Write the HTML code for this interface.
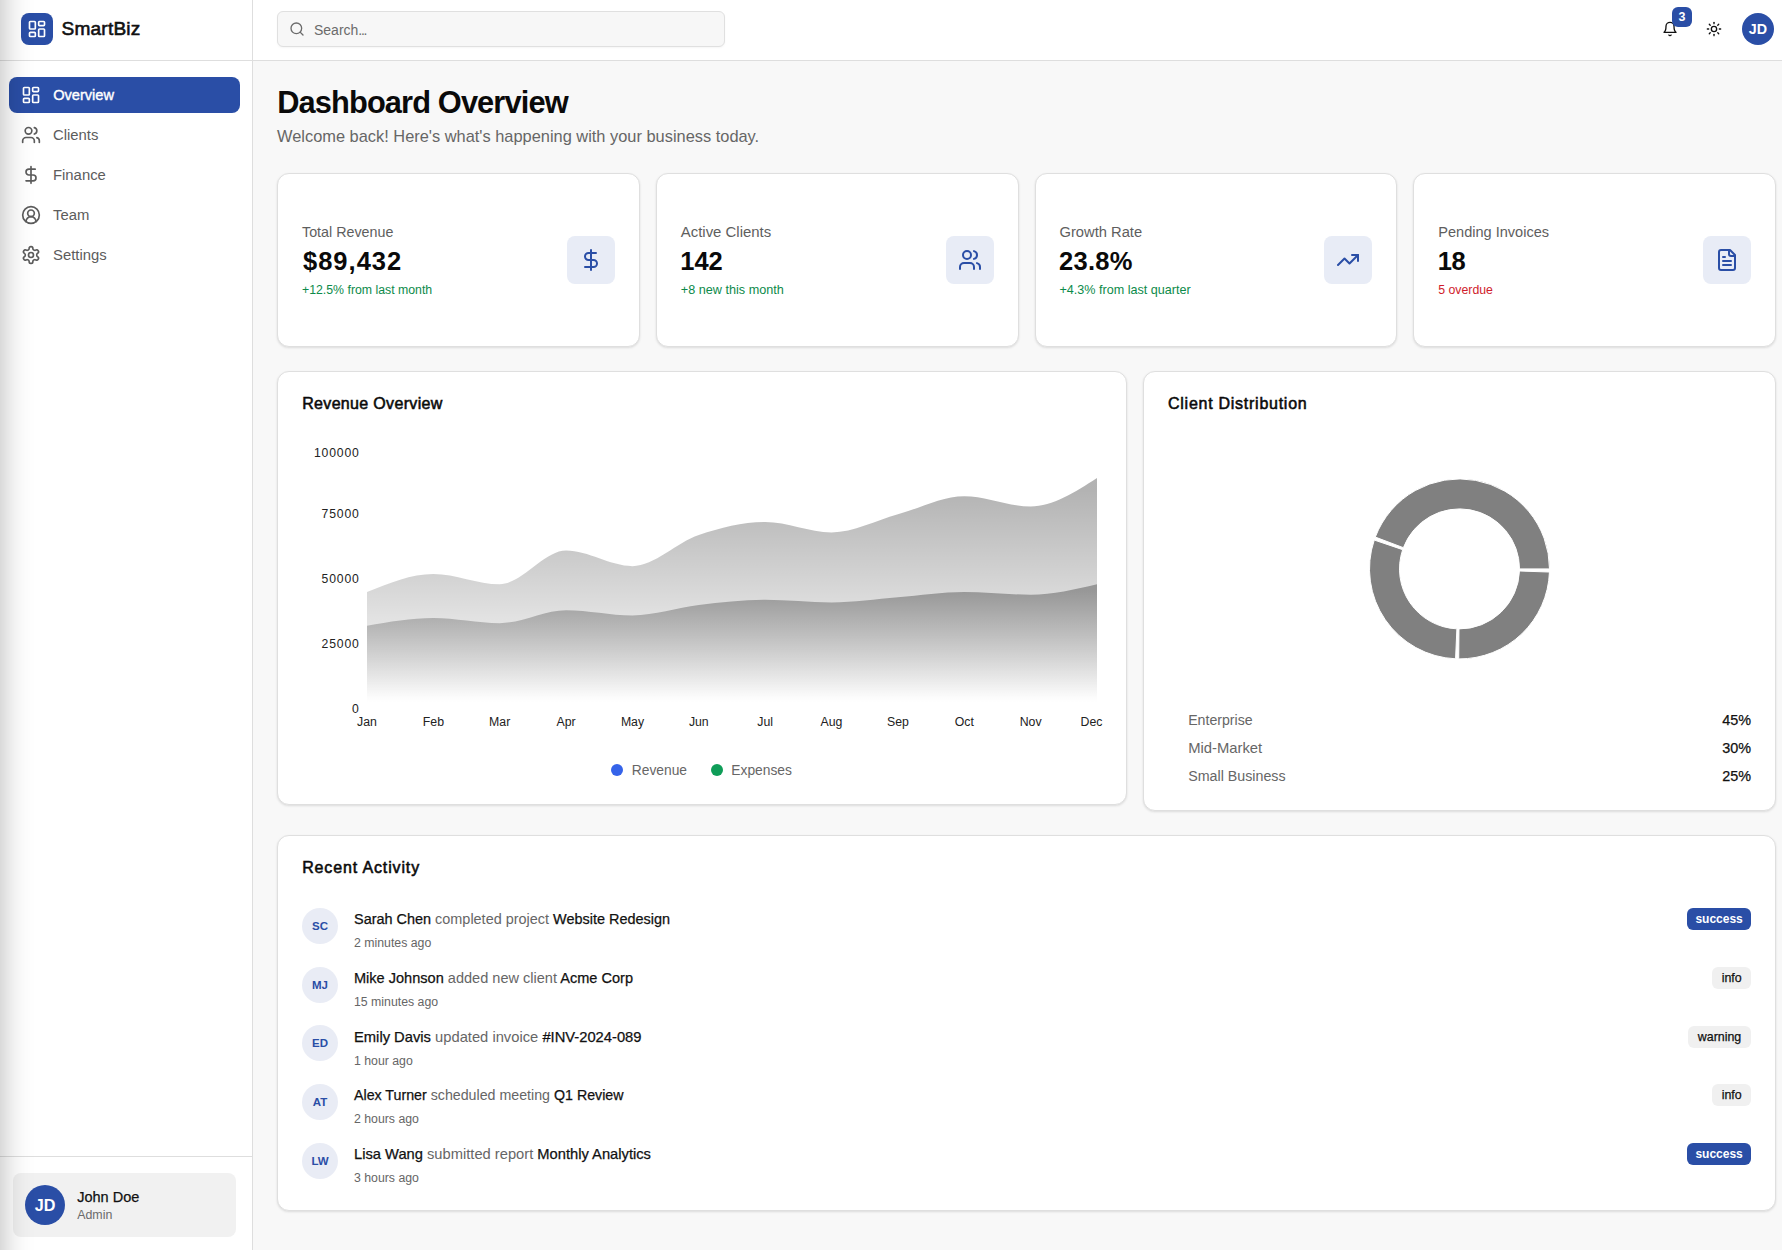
<!DOCTYPE html>
<html lang="en"><head><meta charset="utf-8"><title>SmartBiz Dashboard</title>
<style>
*{box-sizing:border-box;margin:0;padding:0}
html,body{width:1782px;height:1250px;overflow:hidden}
body{background:#f8f8f8;font-family:"Liberation Sans",sans-serif;position:relative;color:#111}
.t{position:absolute;white-space:nowrap;line-height:1}
.a{position:absolute}
.ic{position:absolute;display:block}
.sidebar{position:absolute;left:0;top:0;width:253px;height:1250px;background:#fff;border-right:1px solid #dedede}
.topbar{position:absolute;left:253px;top:0;width:1529px;height:61px;background:#fff;border-bottom:1px solid #dedede}
.sbhead{position:absolute;left:0;top:0;width:252px;height:61px;border-bottom:1px solid #dedede}
.sbfoot{position:absolute;left:0;top:1156px;width:252px;height:94px;border-top:1px solid #dedede;background:#fff}
.card{position:absolute;background:#fff;border:1px solid #dfdfdf;border-radius:12px;box-shadow:0 1px 3px rgba(0,0,0,.07),0 1px 2px rgba(0,0,0,.05)}
.md{-webkit-text-stroke:0.25px currentColor}
.edge{position:absolute;left:-400px;top:-50px;width:400px;height:1350px;box-shadow:0 0 30px rgba(0,0,0,.3);z-index:50;background:#fff}
</style></head><body>

<aside class="sidebar">
<div class="sbhead"></div>
<div class="a" style="left:21px;top:13px;width:32px;height:32px;border-radius:8px;background:#2a4ea6"></div>
<div class="ic" style="left:27px;top:19px"><svg width="20" height="20" viewBox="0 0 24 24" fill="none" stroke="#fff" stroke-width="2" stroke-linecap="round" stroke-linejoin="round" ><rect width="7" height="9" x="3" y="3" rx="1"/><rect width="7" height="5" x="14" y="3" rx="1"/><rect width="7" height="9" x="14" y="12" rx="1"/><rect width="7" height="5" x="3" y="16" rx="1"/></svg></div>
<div class="t" style="left:61.50px;top:19.43px;font-size:19.1px;color:#111;font-weight:400;-webkit-text-stroke:0.6px #111;letter-spacing:0.2px">SmartBiz</div>
<div class="a" style="left:9px;top:77px;width:231px;height:36px;border-radius:8px;background:#2a4ea6"></div>
<div class="ic" style="left:21px;top:85px"><svg width="20" height="20" viewBox="0 0 24 24" fill="none" stroke="#fff" stroke-width="2" stroke-linecap="round" stroke-linejoin="round" ><rect width="7" height="9" x="3" y="3" rx="1"/><rect width="7" height="5" x="14" y="3" rx="1"/><rect width="7" height="9" x="14" y="12" rx="1"/><rect width="7" height="5" x="3" y="16" rx="1"/></svg></div>
<div class="t" style="left:53.20px;top:88.14px;font-size:14.6px;color:#fff;font-weight:400;-webkit-text-stroke:0.4px #fff">Overview</div>
<div class="ic" style="left:21px;top:125px"><svg width="20" height="20" viewBox="0 0 24 24" fill="none" stroke="#5c5c5c" stroke-width="2" stroke-linecap="round" stroke-linejoin="round" ><path d="M16 21v-2a4 4 0 0 0-4-4H6a4 4 0 0 0-4 4v2"/><circle cx="9" cy="7" r="4"/><path d="M22 21v-2a4 4 0 0 0-3-3.87"/><path d="M16 3.13a4 4 0 0 1 0 7.75"/></svg></div>
<div class="t" style="left:53.00px;top:128.03px;font-size:14.85px;color:#5c5c5c;font-weight:400;">Clients</div>
<div class="ic" style="left:21px;top:165px"><svg width="20" height="20" viewBox="0 0 24 24" fill="none" stroke="#5c5c5c" stroke-width="2" stroke-linecap="round" stroke-linejoin="round" ><line x1="12" x2="12" y1="2" y2="22"/><path d="M17 5H9.5a3.5 3.5 0 0 0 0 7h5a3.5 3.5 0 0 1 0 7H6"/></svg></div>
<div class="t" style="left:53.00px;top:168.03px;font-size:14.85px;color:#5c5c5c;font-weight:400;">Finance</div>
<div class="ic" style="left:21px;top:205px"><svg width="20" height="20" viewBox="0 0 24 24" fill="none" stroke="#5c5c5c" stroke-width="2" stroke-linecap="round" stroke-linejoin="round" ><path d="M18 20a6 6 0 0 0-12 0"/><circle cx="12" cy="10" r="4"/><circle cx="12" cy="12" r="10"/></svg></div>
<div class="t" style="left:53.00px;top:208.03px;font-size:14.85px;color:#5c5c5c;font-weight:400;">Team</div>
<div class="ic" style="left:21px;top:245px"><svg width="20" height="20" viewBox="0 0 24 24" fill="none" stroke="#5c5c5c" stroke-width="2" stroke-linecap="round" stroke-linejoin="round" ><path d="M12.22 2h-.44a2 2 0 0 0-2 2v.18a2 2 0 0 1-1 1.73l-.43.25a2 2 0 0 1-2 0l-.15-.08a2 2 0 0 0-2.73.73l-.22.38a2 2 0 0 0 .73 2.73l.15.1a2 2 0 0 1 1 1.72v.51a2 2 0 0 1-1 1.74l-.15.09a2 2 0 0 0-.73 2.73l.22.38a2 2 0 0 0 2.73.73l.15-.08a2 2 0 0 1 2 0l.43.25a2 2 0 0 1 1 1.73V20a2 2 0 0 0 2 2h.44a2 2 0 0 0 2-2v-.18a2 2 0 0 1 1-1.73l.43-.25a2 2 0 0 1 2 0l.15.08a2 2 0 0 0 2.73-.73l.22-.39a2 2 0 0 0-.73-2.73l-.15-.08a2 2 0 0 1-1-1.74v-.5a2 2 0 0 1 1-1.74l.15-.09a2 2 0 0 0 .73-2.73l-.22-.38a2 2 0 0 0-2.73-.73l-.15.08a2 2 0 0 1-2 0l-.43-.25a2 2 0 0 1-1-1.73V4a2 2 0 0 0-2-2z"/><circle cx="12" cy="12" r="3"/></svg></div>
<div class="t" style="left:53.00px;top:248.03px;font-size:14.85px;color:#5c5c5c;font-weight:400;">Settings</div>
<div class="sbfoot"></div>
<div class="a" style="left:13px;top:1173px;width:223px;height:64px;border-radius:8px;background:#f1f1f1"></div>
<div class="a" style="left:25px;top:1185px;width:40px;height:40px;border-radius:50%;background:#2a4ea6"></div>
<div class="a" style="left:25px;top:1185px;width:40px;height:40px;line-height:40px;text-align:center;color:#fff;font-weight:700;font-size:16.2px;padding-top:0px">JD</div>
<div class="t md" style="left:77.20px;top:1189.73px;font-size:14.5px;color:#111;font-weight:400;">John Doe</div>
<div class="t" style="left:77.20px;top:1209.00px;font-size:12.4px;color:#6b6b6b;font-weight:400;">Admin</div>
</aside>
<header class="topbar"></header>
<div class="a" style="left:277px;top:11px;width:448px;height:36px;border-radius:6px;background:#f7f7f7;border:1px solid #e0e0e0;box-shadow:0 1px 2px rgba(0,0,0,.04)"></div>
<div class="ic" style="left:289px;top:21px"><svg width="16" height="16" viewBox="0 0 24 24" fill="none" stroke="#6b6b6b" stroke-width="2" stroke-linecap="round" stroke-linejoin="round" ><circle cx="11" cy="11" r="8"/><path d="m21 21-4.3-4.3"/></svg></div>
<div class="t" style="left:314.00px;top:23.15px;font-size:14px;color:#6b6b6b;font-weight:400;">Search<span style='letter-spacing:-1.3px'>...</span></div>
<div class="ic" style="left:1662px;top:21px"><svg width="16" height="16" viewBox="0 0 24 24" fill="none" stroke="#111" stroke-width="2" stroke-linecap="round" stroke-linejoin="round" ><path d="M6 8a6 6 0 0 1 12 0c0 7 3 9 3 9H3s3-2 3-9"/><path d="M10.3 21a1.94 1.94 0 0 0 3.4 0"/></svg></div>
<div class="a" style="left:1672px;top:7px;width:20px;height:20px;border-radius:6px;background:#2a4ea6;color:#fff;font-weight:700;font-size:12.5px;line-height:20px;text-align:center">3</div>
<div class="ic" style="left:1706px;top:21px"><svg width="16" height="16" viewBox="0 0 24 24" fill="none" stroke="#111" stroke-width="2" stroke-linecap="round" stroke-linejoin="round" ><circle cx="12" cy="12" r="4"/><path d="M12 2v2"/><path d="M12 20v2"/><path d="m4.93 4.93 1.41 1.41"/><path d="m17.66 17.66 1.41 1.41"/><path d="M2 12h2"/><path d="M20 12h2"/><path d="m6.34 17.66-1.41 1.41"/><path d="m19.07 4.93-1.41 1.41"/></svg></div>
<div class="a" style="left:1742px;top:13px;width:32px;height:32px;border-radius:50%;background:#2a4ea6;color:#fff;font-weight:700;font-size:14.3px;line-height:32px;text-align:center">JD</div>
<div class="t" style="left:277.20px;top:87.53px;font-size:30.8px;color:#0a0a0a;font-weight:700;letter-spacing:-0.88px">Dashboard Overview</div>
<div class="t" style="left:277.00px;top:128.02px;font-size:16.4px;color:#666;font-weight:400;">Welcome back! Here&#39;s what&#39;s happening with your business today.</div>
<div class="card" style="left:277.00px;top:173px;width:362.75px;height:174px"></div>
<div class="t" style="left:302.00px;top:224.90px;font-size:14.3px;color:#5e5e5e;font-weight:400;">Total Revenue</div>
<div class="t" style="left:303.00px;top:249.21px;font-size:25.5px;color:#0a0a0a;font-weight:700;letter-spacing:1.0px">$89,432</div>
<div class="t" style="left:302.00px;top:283.59px;font-size:12.3px;color:#0c8a4a;font-weight:400;">+12.5% from last month</div>
<div class="a" style="left:566.75px;top:236px;width:48px;height:48px;border-radius:8px;background:#e8ecf6"></div>
<div class="ic" style="left:578.75px;top:248px"><svg width="24" height="24" viewBox="0 0 24 24" fill="none" stroke="#2a4ea6" stroke-width="2" stroke-linecap="round" stroke-linejoin="round" ><line x1="12" x2="12" y1="2" y2="22"/><path d="M17 5H9.5a3.5 3.5 0 0 0 0 7h5a3.5 3.5 0 0 1 0 7H6"/></svg></div>
<div class="card" style="left:655.75px;top:173px;width:362.75px;height:174px"></div>
<div class="t" style="left:680.75px;top:224.94px;font-size:14.95px;color:#5e5e5e;font-weight:400;">Active Clients</div>
<div class="t" style="left:680.25px;top:249.21px;font-size:25.5px;color:#0a0a0a;font-weight:700;letter-spacing:0px">142</div>
<div class="t" style="left:680.75px;top:283.88px;font-size:12.66px;color:#0c8a4a;font-weight:400;">+8 new this month</div>
<div class="a" style="left:945.50px;top:236px;width:48px;height:48px;border-radius:8px;background:#e8ecf6"></div>
<div class="ic" style="left:957.50px;top:248px"><svg width="24" height="24" viewBox="0 0 24 24" fill="none" stroke="#2a4ea6" stroke-width="2" stroke-linecap="round" stroke-linejoin="round" ><path d="M16 21v-2a4 4 0 0 0-4-4H6a4 4 0 0 0-4 4v2"/><circle cx="9" cy="7" r="4"/><path d="M22 21v-2a4 4 0 0 0-3-3.87"/><path d="M16 3.13a4 4 0 0 1 0 7.75"/></svg></div>
<div class="card" style="left:1034.50px;top:173px;width:362.75px;height:174px"></div>
<div class="t" style="left:1059.50px;top:224.54px;font-size:14.72px;color:#5e5e5e;font-weight:400;">Growth Rate</div>
<div class="t" style="left:1059.00px;top:249.21px;font-size:25.5px;color:#0a0a0a;font-weight:700;letter-spacing:0.3px">23.8%</div>
<div class="t" style="left:1059.50px;top:283.95px;font-size:12.58px;color:#0c8a4a;font-weight:400;">+4.3% from last quarter</div>
<div class="a" style="left:1324.25px;top:236px;width:48px;height:48px;border-radius:8px;background:#e8ecf6"></div>
<div class="ic" style="left:1336.25px;top:248px"><svg width="24" height="24" viewBox="0 0 24 24" fill="none" stroke="#2a4ea6" stroke-width="2" stroke-linecap="round" stroke-linejoin="round" ><polyline points="22 7 13.5 15.5 8.5 10.5 2 17"/><polyline points="16 7 22 7 22 13"/></svg></div>
<div class="card" style="left:1413.25px;top:173px;width:362.75px;height:174px"></div>
<div class="t" style="left:1438.25px;top:224.67px;font-size:14.56px;color:#5e5e5e;font-weight:400;">Pending Invoices</div>
<div class="t" style="left:1437.75px;top:249.21px;font-size:25.5px;color:#0a0a0a;font-weight:700;letter-spacing:-0.5px">18</div>
<div class="t" style="left:1438.25px;top:283.59px;font-size:12.3px;color:#d01c2c;font-weight:400;">5 overdue</div>
<div class="a" style="left:1703.00px;top:236px;width:48px;height:48px;border-radius:8px;background:#e8ecf6"></div>
<div class="ic" style="left:1715.00px;top:248px"><svg width="24" height="24" viewBox="0 0 24 24" fill="none" stroke="#2a4ea6" stroke-width="2" stroke-linecap="round" stroke-linejoin="round" ><path d="M15 2H6a2 2 0 0 0-2 2v16a2 2 0 0 0 2 2h12a2 2 0 0 0 2-2V7Z"/><path d="M14 2v4a2 2 0 0 0 2 2h4"/><path d="M10 9H8"/><path d="M16 13H8"/><path d="M16 17H8"/></svg></div>
<div class="card" style="left:277px;top:371px;width:849.71px;height:434px"></div>
<div class="card" style="left:1142.71px;top:371px;width:633.29px;height:440px"></div>
<div class="t" style="left:302.20px;top:396.06px;font-size:16px;color:#0a0a0a;font-weight:400;-webkit-text-stroke:0.55px #0a0a0a;letter-spacing:0.33px">Revenue Overview</div>
<svg class="a" style="left:0;top:0" width="1782" height="1250" viewBox="0 0 1782 1250">
<defs><linearGradient id="gR" x1="0" y1="0" x2="0" y2="1"><stop offset="5%" stop-color="#000" stop-opacity="0.3"/><stop offset="95%" stop-color="#000" stop-opacity="0"/></linearGradient><linearGradient id="gE" x1="0" y1="0" x2="0" y2="1"><stop offset="5%" stop-color="#000" stop-opacity="0.3"/><stop offset="95%" stop-color="#000" stop-opacity="0"/></linearGradient></defs>
<path d="M367.00,592.06C389.12,582.99,411.24,573.92,433.36,573.92C455.48,573.92,477.61,584.28,499.73,584.28C521.85,584.28,543.97,550.59,566.09,550.59C588.21,550.59,610.33,566.14,632.45,566.14C654.58,566.14,676.70,542.38,698.82,535.04C720.94,527.69,743.06,522.08,765.18,522.08C787.30,522.08,809.42,532.44,831.55,532.44C853.67,532.44,875.79,520.35,897.91,514.30C920.03,508.25,942.15,496.16,964.27,496.16C986.39,496.16,1008.52,506.52,1030.64,506.52C1052.76,506.52,1074.88,492.27,1097.00,478.01L1097.00,708.70L367.00,708.70Z" fill="url(#gR)"/>
<path d="M367.00,625.76C389.12,621.87,411.24,617.98,433.36,617.98C455.48,617.98,477.61,623.16,499.73,623.16C521.85,623.16,543.97,610.20,566.09,610.20C588.21,610.20,610.33,615.39,632.45,615.39C654.58,615.39,676.70,607.61,698.82,605.02C720.94,602.43,743.06,599.84,765.18,599.84C787.30,599.84,809.42,602.43,831.55,602.43C853.67,602.43,875.79,598.97,897.91,597.24C920.03,595.52,942.15,592.06,964.27,592.06C986.39,592.06,1008.52,594.65,1030.64,594.65C1052.76,594.65,1074.88,589.47,1097.00,584.28L1097.00,708.70L367.00,708.70Z" fill="url(#gE)"/>
<text x="359.7" y="457.3" text-anchor="end" font-family="Liberation Sans" font-size="12.2" letter-spacing="0.85" fill="#222">100000</text>
<text x="359.7" y="518.1" text-anchor="end" font-family="Liberation Sans" font-size="12.2" letter-spacing="0.85" fill="#222">75000</text>
<text x="359.7" y="582.5" text-anchor="end" font-family="Liberation Sans" font-size="12.2" letter-spacing="0.85" fill="#222">50000</text>
<text x="359.7" y="647.5" text-anchor="end" font-family="Liberation Sans" font-size="12.2" letter-spacing="0.85" fill="#222">25000</text>
<text x="359.7" y="713.3" text-anchor="end" font-family="Liberation Sans" font-size="12.2" letter-spacing="0.85" fill="#222">0</text>
<text x="367.0" y="726.0" text-anchor="middle" font-family="Liberation Sans" font-size="12.3" fill="#222">Jan</text>
<text x="433.4" y="726.0" text-anchor="middle" font-family="Liberation Sans" font-size="12.3" fill="#222">Feb</text>
<text x="499.7" y="726.0" text-anchor="middle" font-family="Liberation Sans" font-size="12.3" fill="#222">Mar</text>
<text x="566.1" y="726.0" text-anchor="middle" font-family="Liberation Sans" font-size="12.3" fill="#222">Apr</text>
<text x="632.5" y="726.0" text-anchor="middle" font-family="Liberation Sans" font-size="12.3" fill="#222">May</text>
<text x="698.8" y="726.0" text-anchor="middle" font-family="Liberation Sans" font-size="12.3" fill="#222">Jun</text>
<text x="765.2" y="726.0" text-anchor="middle" font-family="Liberation Sans" font-size="12.3" fill="#222">Jul</text>
<text x="831.5" y="726.0" text-anchor="middle" font-family="Liberation Sans" font-size="12.3" fill="#222">Aug</text>
<text x="897.9" y="726.0" text-anchor="middle" font-family="Liberation Sans" font-size="12.3" fill="#222">Sep</text>
<text x="964.3" y="726.0" text-anchor="middle" font-family="Liberation Sans" font-size="12.3" fill="#222">Oct</text>
<text x="1030.6" y="726.0" text-anchor="middle" font-family="Liberation Sans" font-size="12.3" fill="#222">Nov</text>
<text x="1091.5" y="726.0" text-anchor="middle" font-family="Liberation Sans" font-size="12.3" fill="#222">Dec</text>
<path d="M1549.50,568.90A90,90,0,0,0,1375.31,537.09L1403.37,547.69A60,60,0,0,1,1519.50,568.90Z" fill="#808080" stroke="#fff" stroke-width="1"/>
<path d="M1374.25,540.04A90,90,0,0,0,1455.57,658.81L1456.88,628.84A60,60,0,0,1,1402.67,549.66Z" fill="#808080" stroke="#fff" stroke-width="1"/>
<path d="M1458.71,658.90A90,90,0,0,0,1549.45,572.04L1519.46,570.99A60,60,0,0,1,1458.98,628.90Z" fill="#808080" stroke="#fff" stroke-width="1"/>
</svg>
<div class="a" style="left:611px;top:764px;width:12px;height:12px;border-radius:50%;background:#3563e9"></div>
<div class="t" style="left:631.80px;top:763.52px;font-size:13.8px;color:#666;font-weight:400;">Revenue</div>
<div class="a" style="left:711px;top:764px;width:12px;height:12px;border-radius:50%;background:#0f9d58"></div>
<div class="t" style="left:731.30px;top:763.52px;font-size:13.8px;color:#666;font-weight:400;">Expenses</div>
<div class="t" style="left:1168.00px;top:396.06px;font-size:16px;color:#0a0a0a;font-weight:400;-webkit-text-stroke:0.55px #0a0a0a;letter-spacing:0.74px">Client Distribution</div>
<div class="t" style="left:1188.20px;top:713.02px;font-size:14.15px;color:#666;font-weight:400;">Enterprise</div>
<div class="t md" style="right:31px;top:712.81px;font-size:14.4px;color:#111">45%</div>
<div class="t" style="left:1188.20px;top:740.62px;font-size:14.8px;color:#666;font-weight:400;">Mid-Market</div>
<div class="t md" style="right:31px;top:740.96px;font-size:14.4px;color:#111">30%</div>
<div class="t" style="left:1188.20px;top:769.24px;font-size:14.25px;color:#666;font-weight:400;">Small Business</div>
<div class="t md" style="right:31px;top:769.11px;font-size:14.4px;color:#111">25%</div>
<div class="card" style="left:277px;top:835px;width:1499px;height:376px"></div>
<div class="t" style="left:302.20px;top:860.06px;font-size:16px;color:#0a0a0a;font-weight:400;-webkit-text-stroke:0.55px #0a0a0a;letter-spacing:0.86px">Recent Activity</div>
<div class="a" style="left:302px;top:907.80px;width:36px;height:36px;border-radius:50%;background:#e9ecf5;color:#2a4ea6;font-weight:700;font-size:11.5px;line-height:36px;text-align:center">SC</div>
<div class="t" style="left:354.00px;top:911.77px;font-size:14.45px;color:#111;font-weight:400;"><span class="md" style="color:#111">Sarah Chen</span> <span style="color:#666">completed project</span> <span class="md" style="color:#111">Website Redesign</span></div>
<div class="t" style="left:354.00px;top:937.19px;font-size:12.3px;color:#666;font-weight:400;">2 minutes ago</div>
<div class="a" style="left:1687.2px;top:908.00px;width:63.8px;height:22px;text-align:center;border-radius:6px;background:#2a4ea6;color:#fff;font-weight:700;font-size:12px;line-height:22px">success</div>
<div class="a" style="left:302px;top:966.50px;width:36px;height:36px;border-radius:50%;background:#e9ecf5;color:#2a4ea6;font-weight:700;font-size:11.5px;line-height:36px;text-align:center">MJ</div>
<div class="t" style="left:354.00px;top:971.17px;font-size:14.56px;color:#111;font-weight:400;"><span class="md" style="color:#111">Mike Johnson</span> <span style="color:#666">added new client</span> <span class="md" style="color:#111">Acme Corp</span></div>
<div class="t" style="left:354.00px;top:995.89px;font-size:12.3px;color:#666;font-weight:400;">15 minutes ago</div>
<div class="a md" style="left:1712.40px;top:967.10px;width:38.6px;height:22px;text-align:center;border-radius:6px;background:#f0f0f0;color:#111;font-size:12.4px;line-height:22px">info</div>
<div class="a" style="left:302px;top:1025.20px;width:36px;height:36px;border-radius:50%;background:#e9ecf5;color:#2a4ea6;font-weight:700;font-size:11.5px;line-height:36px;text-align:center">ED</div>
<div class="t" style="left:354.00px;top:1029.82px;font-size:14.74px;color:#111;font-weight:400;"><span class="md" style="color:#111">Emily Davis</span> <span style="color:#666">updated invoice</span> <span class="md" style="color:#111">#INV-2024-089</span></div>
<div class="t" style="left:354.00px;top:1054.59px;font-size:12.3px;color:#666;font-weight:400;">1 hour ago</div>
<div class="a md" style="left:1688.10px;top:1026.30px;width:62.9px;height:22px;text-align:center;border-radius:6px;background:#f0f0f0;color:#111;font-size:12.4px;line-height:22px">warning</div>
<div class="a" style="left:302px;top:1083.90px;width:36px;height:36px;border-radius:50%;background:#e9ecf5;color:#2a4ea6;font-weight:700;font-size:11.5px;line-height:36px;text-align:center">AT</div>
<div class="t" style="left:354.00px;top:1088.06px;font-size:14.22px;color:#111;font-weight:400;"><span class="md" style="color:#111">Alex Turner</span> <span style="color:#666">scheduled meeting</span> <span class="md" style="color:#111">Q1 Review</span></div>
<div class="t" style="left:354.00px;top:1113.29px;font-size:12.3px;color:#666;font-weight:400;">2 hours ago</div>
<div class="a md" style="left:1712.40px;top:1084.20px;width:38.6px;height:22px;text-align:center;border-radius:6px;background:#f0f0f0;color:#111;font-size:12.4px;line-height:22px">info</div>
<div class="a" style="left:302px;top:1142.60px;width:36px;height:36px;border-radius:50%;background:#e9ecf5;color:#2a4ea6;font-weight:700;font-size:11.5px;line-height:36px;text-align:center">LW</div>
<div class="t" style="left:354.00px;top:1147.15px;font-size:14.71px;color:#111;font-weight:400;"><span class="md" style="color:#111">Lisa Wang</span> <span style="color:#666">submitted report</span> <span class="md" style="color:#111">Monthly Analytics</span></div>
<div class="t" style="left:354.00px;top:1171.99px;font-size:12.3px;color:#666;font-weight:400;">3 hours ago</div>
<div class="a" style="left:1687.2px;top:1143.10px;width:63.8px;height:22px;text-align:center;border-radius:6px;background:#2a4ea6;color:#fff;font-weight:700;font-size:12px;line-height:22px">success</div>
<div class="edge"></div>
</body></html>
